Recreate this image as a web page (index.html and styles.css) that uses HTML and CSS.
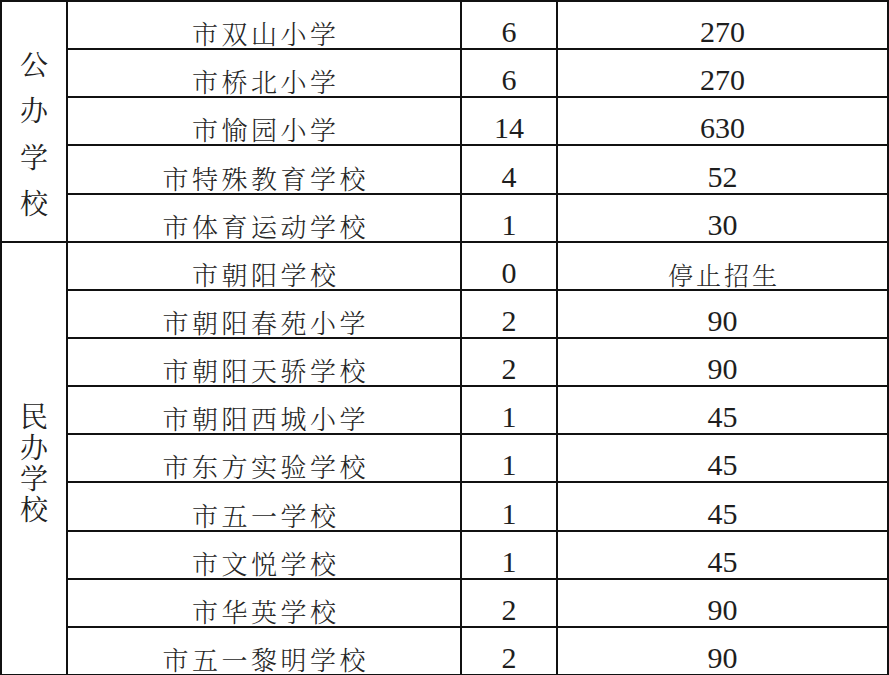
FILE: index.html
```html
<!DOCTYPE html>
<html lang="zh-CN">
<head>
<meta charset="utf-8">
<title>学校招生计划</title>
<link rel="stylesheet" href="styles.css">
</head>
<body>
<table class="plan">
  <colgroup>
    <col class="c-type">
    <col class="c-name">
    <col class="c-cls">
    <col class="c-num">
  </colgroup>
  <tbody>
    <tr>
      <td class="type" rowspan="5"><div class="vert vert-pub"><span>公</span><span>办</span><span>学</span><span>校</span></div></td>
      <td class="name">市双山小学</td><td class="num">6</td><td class="num">270</td>
    </tr>
    <tr><td class="name">市桥北小学</td><td class="num">6</td><td class="num">270</td></tr>
    <tr><td class="name">市愉园小学</td><td class="num">14</td><td class="num">630</td></tr>
    <tr><td class="name">市特殊教育学校</td><td class="num">4</td><td class="num">52</td></tr>
    <tr><td class="name">市体育运动学校</td><td class="num">1</td><td class="num">30</td></tr>
    <tr>
      <td class="type" rowspan="9"><div class="vert vert-pri"><span>民</span><span>办</span><span>学</span><span>校</span></div></td>
      <td class="name">市朝阳学校</td><td class="num">0</td><td class="note">停止招生</td>
    </tr>
    <tr><td class="name">市朝阳春苑小学</td><td class="num">2</td><td class="num">90</td></tr>
    <tr><td class="name">市朝阳天骄学校</td><td class="num">2</td><td class="num">90</td></tr>
    <tr><td class="name">市朝阳西城小学</td><td class="num">1</td><td class="num">45</td></tr>
    <tr><td class="name">市东方实验学校</td><td class="num">1</td><td class="num">45</td></tr>
    <tr><td class="name">市五一学校</td><td class="num">1</td><td class="num">45</td></tr>
    <tr><td class="name">市文悦学校</td><td class="num">1</td><td class="num">45</td></tr>
    <tr><td class="name">市华英学校</td><td class="num">2</td><td class="num">90</td></tr>
    <tr><td class="name">市五一黎明学校</td><td class="num">2</td><td class="num">90</td></tr>
  </tbody>
</table>
</body>
</html>
```

FILE: styles.css
```css
html, body {
  margin: 0;
  padding: 0;
  background: #ffffff;
}

.plan {
  border-collapse: collapse;
  table-layout: fixed;
  width: 888px;
  color: #222222;
}

.c-type { width: 66px; }
.c-name { width: 394px; }
.c-cls { width: 96px; }
.c-num { width: 331px; }

.plan td {
  border: 2px solid #111111;
  height: 48.15px;
  padding: 0;
  text-align: center;
  box-sizing: border-box;
  white-space: nowrap;
}

.name, .note {
  font-family: "Noto Serif CJK SC", "Noto Sans CJK SC", sans-serif;
  font-weight: 300;
  font-size: 26px;
  letter-spacing: 3.5px;
  text-indent: 3.5px;
  line-height: 30px;
  vertical-align: bottom;
  padding-bottom: 2px;
  color: #262626;
}

.note {
  font-size: 25px;
  letter-spacing: 3px;
  text-indent: 3px;
}

.plan .num {
  font-family: "Liberation Serif", "Times New Roman", "DejaVu Serif", serif;
  font-size: 30px;
  line-height: 30px;
  vertical-align: bottom;
  padding-bottom: 1px;
  color: #1e1e1e;
}

.type {
  vertical-align: middle;
}

.vert {
  font-family: "Noto Serif CJK SC", "Noto Sans CJK SC", sans-serif;
  font-size: 28px;
  width: 1em;
  margin: 0 auto;
  display: flex;
  flex-direction: column;
  align-items: center;
}

.vert span {
  display: block;
  line-height: 1;
}

.vert-pub {
  gap: 18.5px;
  padding-top: 22px;
}

.vert-pri {
  gap: 3px;
  padding-top: 6px;
}
```
